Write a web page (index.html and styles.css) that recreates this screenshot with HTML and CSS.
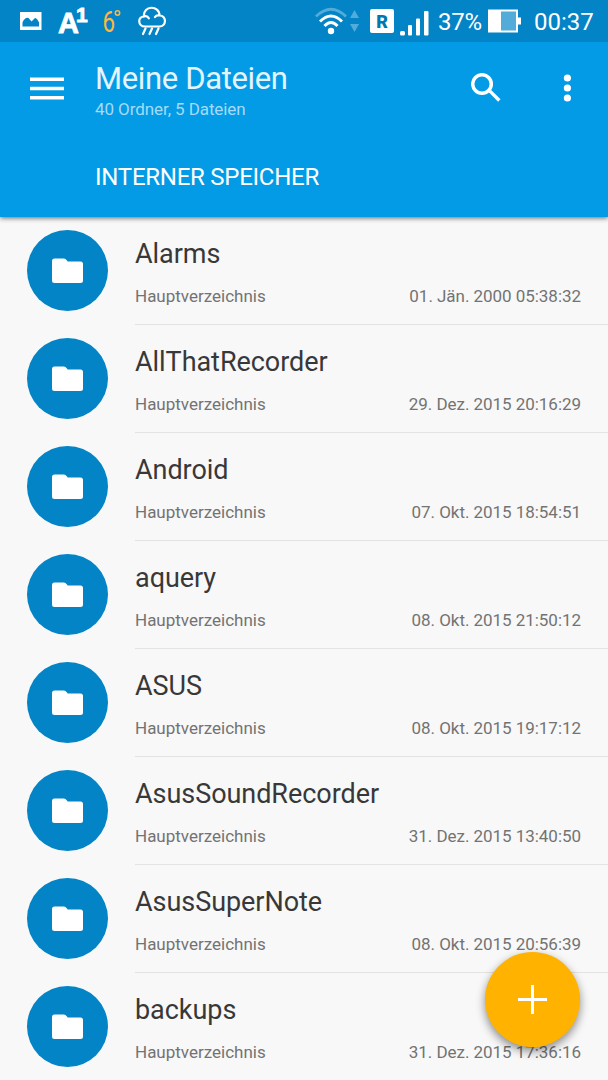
FILE: index.html
```
<!DOCTYPE html>
<html lang="de">
  <head>
    <meta charset="utf-8" />
    <title>Meine Dateien</title>
    <link rel="stylesheet" href="styles.css" />
  </head>
  <body>
    <svg class="sprite">
      <symbol id="folder" viewBox="0 0 32 26">
        <path d="M2.500 0.500h9.500q1.500 0 2.500 1.500l1.200 1.500H28.500a2.500 2.500 0 0 1 2.500 2.500v16.500a2.500 2.500 0 0 1-2.500 2.500H2.500a2.500 2.500 0 0 1-2.500-2.500V3a2.500 2.500 0 0 1 2.500-2.500z" fill="#fff" />
      </symbol>
    </svg>

    <div class="status-bar">
      <div class="status-left">
        <svg class="icon-picture" width="22" height="18" viewBox="0 0 22 18">
          <path d="M0 0h21.500v18H0zM2.500 14.500h16.500V10.500Q17 6 15 6L11.500 9.500 8.500 6Q5 5 2.500 10.500z" fill="#fff" fill-rule="evenodd" />
        </svg>
        <div class="carrier">A<sup>1</sup></div>
        <svg class="icon-temp" width="20" height="42" viewBox="0 0 20 42">
          <text x="-0.500" y="32" textLength="12.500" lengthAdjust="spacingAndGlyphs">6</text>
          <circle cx="14.500" cy="13" r="2.200" fill="none" stroke="#ffb741" stroke-width="1.500" />
        </svg>
        <svg class="icon-rain" width="28" height="30" viewBox="0 0 28 30">
          <path d="M7 20.500C-0.500 20.500-0.500 10.500 6 10.500C5-1 21.500-1 21.500 9.500C29 9.500 28.500 20.500 21.500 20.500zM6 10.500c2-.8 4 .2 4.800 1.800M21.500 9.500c-2-.5-3.500 0-4.500 1.500" />
          <path d="M7.500 22.500l-2.500 5.500M14 22.500l-2.500 5.500M20.500 22.500l-2.500 5.500" />
        </svg>
      </div>
      <div class="status-right">
        <svg class="icon-wifi" width="46" height="28" viewBox="0 0 46 28">
          <g fill="none" stroke="#fff" stroke-width="2.900">
            <path d="M1 9.500Q16 -5 31 9.500" stroke="#52abd9" />
            <path d="M5 14.500Q16 3.500 27 14.500" />
            <path d="M9.500 19Q16 12 22.500 19" />
          </g>
          <circle cx="16" cy="24" r="3.200" fill="#fff" />
          <path d="M35 11l4.500-8 4.500 8zM35 17h9l-4.500 8z" fill="#52abd9" />
        </svg>
        <div class="roaming">R</div>
        <svg class="icon-signal" width="29" height="25" viewBox="0 0 29 25">
          <g fill="#fff">
            <rect x="0" y="20" width="5" height="4.500" rx="1.500" />
            <rect x="8" y="14" width="4" height="10.500" rx="1" />
            <rect x="16" y="7.500" width="4" height="17" rx="1" />
            <rect x="24" y="0" width="4.500" height="24.500" rx="1" />
          </g>
        </svg>
        <div class="percent">37%</div>
        <svg class="icon-battery" width="34" height="24" viewBox="0 0 34 24">
          <path d="M0 0.500h30v8h3v7h-3V23.500H0z" fill="#fff" />
          <rect x="13" y="2.500" width="15" height="19" fill="#52abd9" />
        </svg>
        <div class="clock">00:37</div>
      </div>
    </div>

    <div class="toolbar">
      <div class="toolbar-top">
        <svg class="menu" width="34" height="23" viewBox="0 0 34 23">
          <path d="M0 2.200h34M0 11.500h34M0 20.700h34" stroke="#fff" stroke-width="3.500" />
        </svg>
        <div class="headings">
          <h1>Meine Dateien</h1>
          <p>40 Ordner, 5 Dateien</p>
        </div>
        <svg class="search" width="30" height="30" viewBox="0 0 30 30">
          <circle cx="11" cy="11" r="9.300" fill="none" stroke="#fff" stroke-width="3.500" />
          <path d="M18 19l2.200-2 9.300 9.300-2.400 2.400L18 19.500z" fill="#fff" />
        </svg>
        <svg class="more" width="8" height="28" viewBox="0 0 8 28">
          <g fill="#fff">
            <circle cx="4.400" cy="4" r="3.600" />
            <circle cx="4.400" cy="14" r="3.600" />
            <circle cx="4.400" cy="24" r="3.600" />
          </g>
        </svg>
      </div>
      <div class="tab">INTERNER SPEICHER</div>
    </div>

    <div class="file-list">
      <div class="row">
        <div class="avatar"><svg><use href="#folder" /></svg></div>
        <div class="info">
          <div class="name">Alarms</div>
          <div class="meta"><span>Hauptverzeichnis</span><span class="date">01. Jän. 2000 05:38:32</span></div>
        </div>
      </div>
      <div class="row">
        <div class="avatar"><svg><use href="#folder" /></svg></div>
        <div class="info">
          <div class="name">AllThatRecorder</div>
          <div class="meta"><span>Hauptverzeichnis</span><span class="date">29. Dez. 2015 20:16:29</span></div>
        </div>
      </div>
      <div class="row">
        <div class="avatar"><svg><use href="#folder" /></svg></div>
        <div class="info">
          <div class="name">Android</div>
          <div class="meta"><span>Hauptverzeichnis</span><span class="date">07. Okt. 2015 18:54:51</span></div>
        </div>
      </div>
      <div class="row">
        <div class="avatar"><svg><use href="#folder" /></svg></div>
        <div class="info">
          <div class="name">aquery</div>
          <div class="meta"><span>Hauptverzeichnis</span><span class="date">08. Okt. 2015 21:50:12</span></div>
        </div>
      </div>
      <div class="row">
        <div class="avatar"><svg><use href="#folder" /></svg></div>
        <div class="info">
          <div class="name">ASUS</div>
          <div class="meta"><span>Hauptverzeichnis</span><span class="date">08. Okt. 2015 19:17:12</span></div>
        </div>
      </div>
      <div class="row">
        <div class="avatar"><svg><use href="#folder" /></svg></div>
        <div class="info">
          <div class="name">AsusSoundRecorder</div>
          <div class="meta"><span>Hauptverzeichnis</span><span class="date">31. Dez. 2015 13:40:50</span></div>
        </div>
      </div>
      <div class="row">
        <div class="avatar"><svg><use href="#folder" /></svg></div>
        <div class="info">
          <div class="name">AsusSuperNote</div>
          <div class="meta"><span>Hauptverzeichnis</span><span class="date">08. Okt. 2015 20:56:39</span></div>
        </div>
      </div>
      <div class="row">
        <div class="avatar"><svg><use href="#folder" /></svg></div>
        <div class="info">
          <div class="name">backups</div>
          <div class="meta"><span>Hauptverzeichnis</span><span class="date">31. Dez. 2015 17:36:16</span></div>
        </div>
      </div>
    </div>

    <button class="add-btn">
      <svg width="29" height="29" viewBox="0 0 29 29">
        <path d="M14.500 0v29M0 14.500h29" stroke="#fff" stroke-width="3" />
      </svg>
    </button>
  </body>
</html>
```
FILE: styles.css
```
* {
  box-sizing: border-box;
}

body {
  margin: 0;
  height: 1080px;
  overflow: hidden;
  font-family: Roboto, sans-serif;
  background-color: #f8f8f8;
}

svg {
  display: block;
  flex-shrink: 0;
}

.sprite {
  display: none;
}

/* status bar */
.status-bar {
  position: relative;
  z-index: 1;
  display: flex;
  justify-content: space-between;
  height: 42px;
  padding: 0 14px 0 20px;
  background-color: #0284c7;
  color: #fff;
}

.status-left,
.status-right {
  display: flex;
  align-items: center;
}

.carrier {
  display: flex;
  width: 28px;
  margin-left: 16px;
  padding-top: 4px;
  font-family: "Liberation Sans", Arial, sans-serif;
  font-size: 29px;
  font-weight: bold;
  line-height: 42px;
  -webkit-text-stroke: 0.8px #fff;
}

.carrier sup {
  font-size: 21px;
  line-height: 26px;
  margin-left: -3px;
}

.icon-temp {
  margin-left: 17px;
}

.icon-temp text {
  font-size: 29px;
  fill: #ffb741;
}

.icon-rain {
  margin-left: 15px;
  fill: none;
  stroke: #fff;
  stroke-width: 2.2;
  stroke-linecap: round;
}

.roaming {
  width: 24px;
  height: 24px;
  margin-left: 9px;
  border-radius: 2px;
  background-color: #fff;
  color: #0277ab;
  font-size: 18px;
  font-weight: 900;
  line-height: 25px;
  text-align: center;
}

.icon-signal {
  margin-left: 6px;
  margin-top: 4px;
}

.percent {
  width: 44px;
  margin-left: 9px;
  padding-top: 2px;
  font-size: 24px;
  line-height: 44px;
  letter-spacing: -0.3px;
}

.icon-battery {
  margin-left: 6px;
}

.clock {
  width: 60px;
  margin-left: 12px;
  padding-top: 2px;
  font-size: 24px;
  line-height: 44px;
}

/* toolbar */
.toolbar {
  position: relative;
  height: 175px;
  background-color: #039be5;
  color: #fff;
  box-shadow: 0 1px 5px rgba(0, 0, 0, 0.6);
}

.toolbar-top {
  display: flex;
  align-items: center;
  height: 92px;
  padding: 0 37px 0 30px;
}

.headings {
  flex-grow: 1;
  margin-left: 31px;
  padding-top: 5px;
}

h1 {
  margin: 0;
  font-size: 31px;
  font-weight: 400;
  line-height: 36px;
  letter-spacing: -0.35px;
  color: #e3f4fd;
}

.headings p {
  margin: 1px 0 0;
  font-size: 17px;
  line-height: 22px;
  letter-spacing: -0.08px;
  color: #a5daf6;
}

.more {
  margin-left: 62px;
}

.tab {
  padding-left: 95px;
  font-size: 24px;
  line-height: 86px;
  letter-spacing: -0.25px;
}

/* file list */
.row {
  display: flex;
  height: 108px;
  padding-left: 27px;
}

.avatar {
  display: flex;
  justify-content: center;
  align-items: center;
  width: 81px;
  height: 81px;
  margin-top: 13px;
  border-radius: 50%;
  background-color: #0284c7;
}

.avatar svg {
  width: 32px;
  height: 26px;
}

.info {
  flex-grow: 1;
  margin-left: 27px;
  padding: 21px 27px 0 0;
  border-bottom: 1px solid #e3e3e3;
}

.name {
  font-size: 27px;
  line-height: 32px;
  letter-spacing: -0.05px;
  color: #383838;
}

.meta {
  display: flex;
  justify-content: space-between;
  margin-top: 15px;
  font-size: 17px;
  line-height: 22px;
  color: #737373;
}

.date {
  letter-spacing: -0.04px;
}

.add-btn {
  position: absolute;
  right: 28.5px;
  bottom: 33.5px;
  display: flex;
  justify-content: center;
  align-items: center;
  width: 95px;
  height: 95px;
  padding: 0;
  border: none;
  border-radius: 50%;
  background-color: #ffb300;
  box-shadow: 0 4px 10px rgba(0, 0, 0, 0.45);
}
```
